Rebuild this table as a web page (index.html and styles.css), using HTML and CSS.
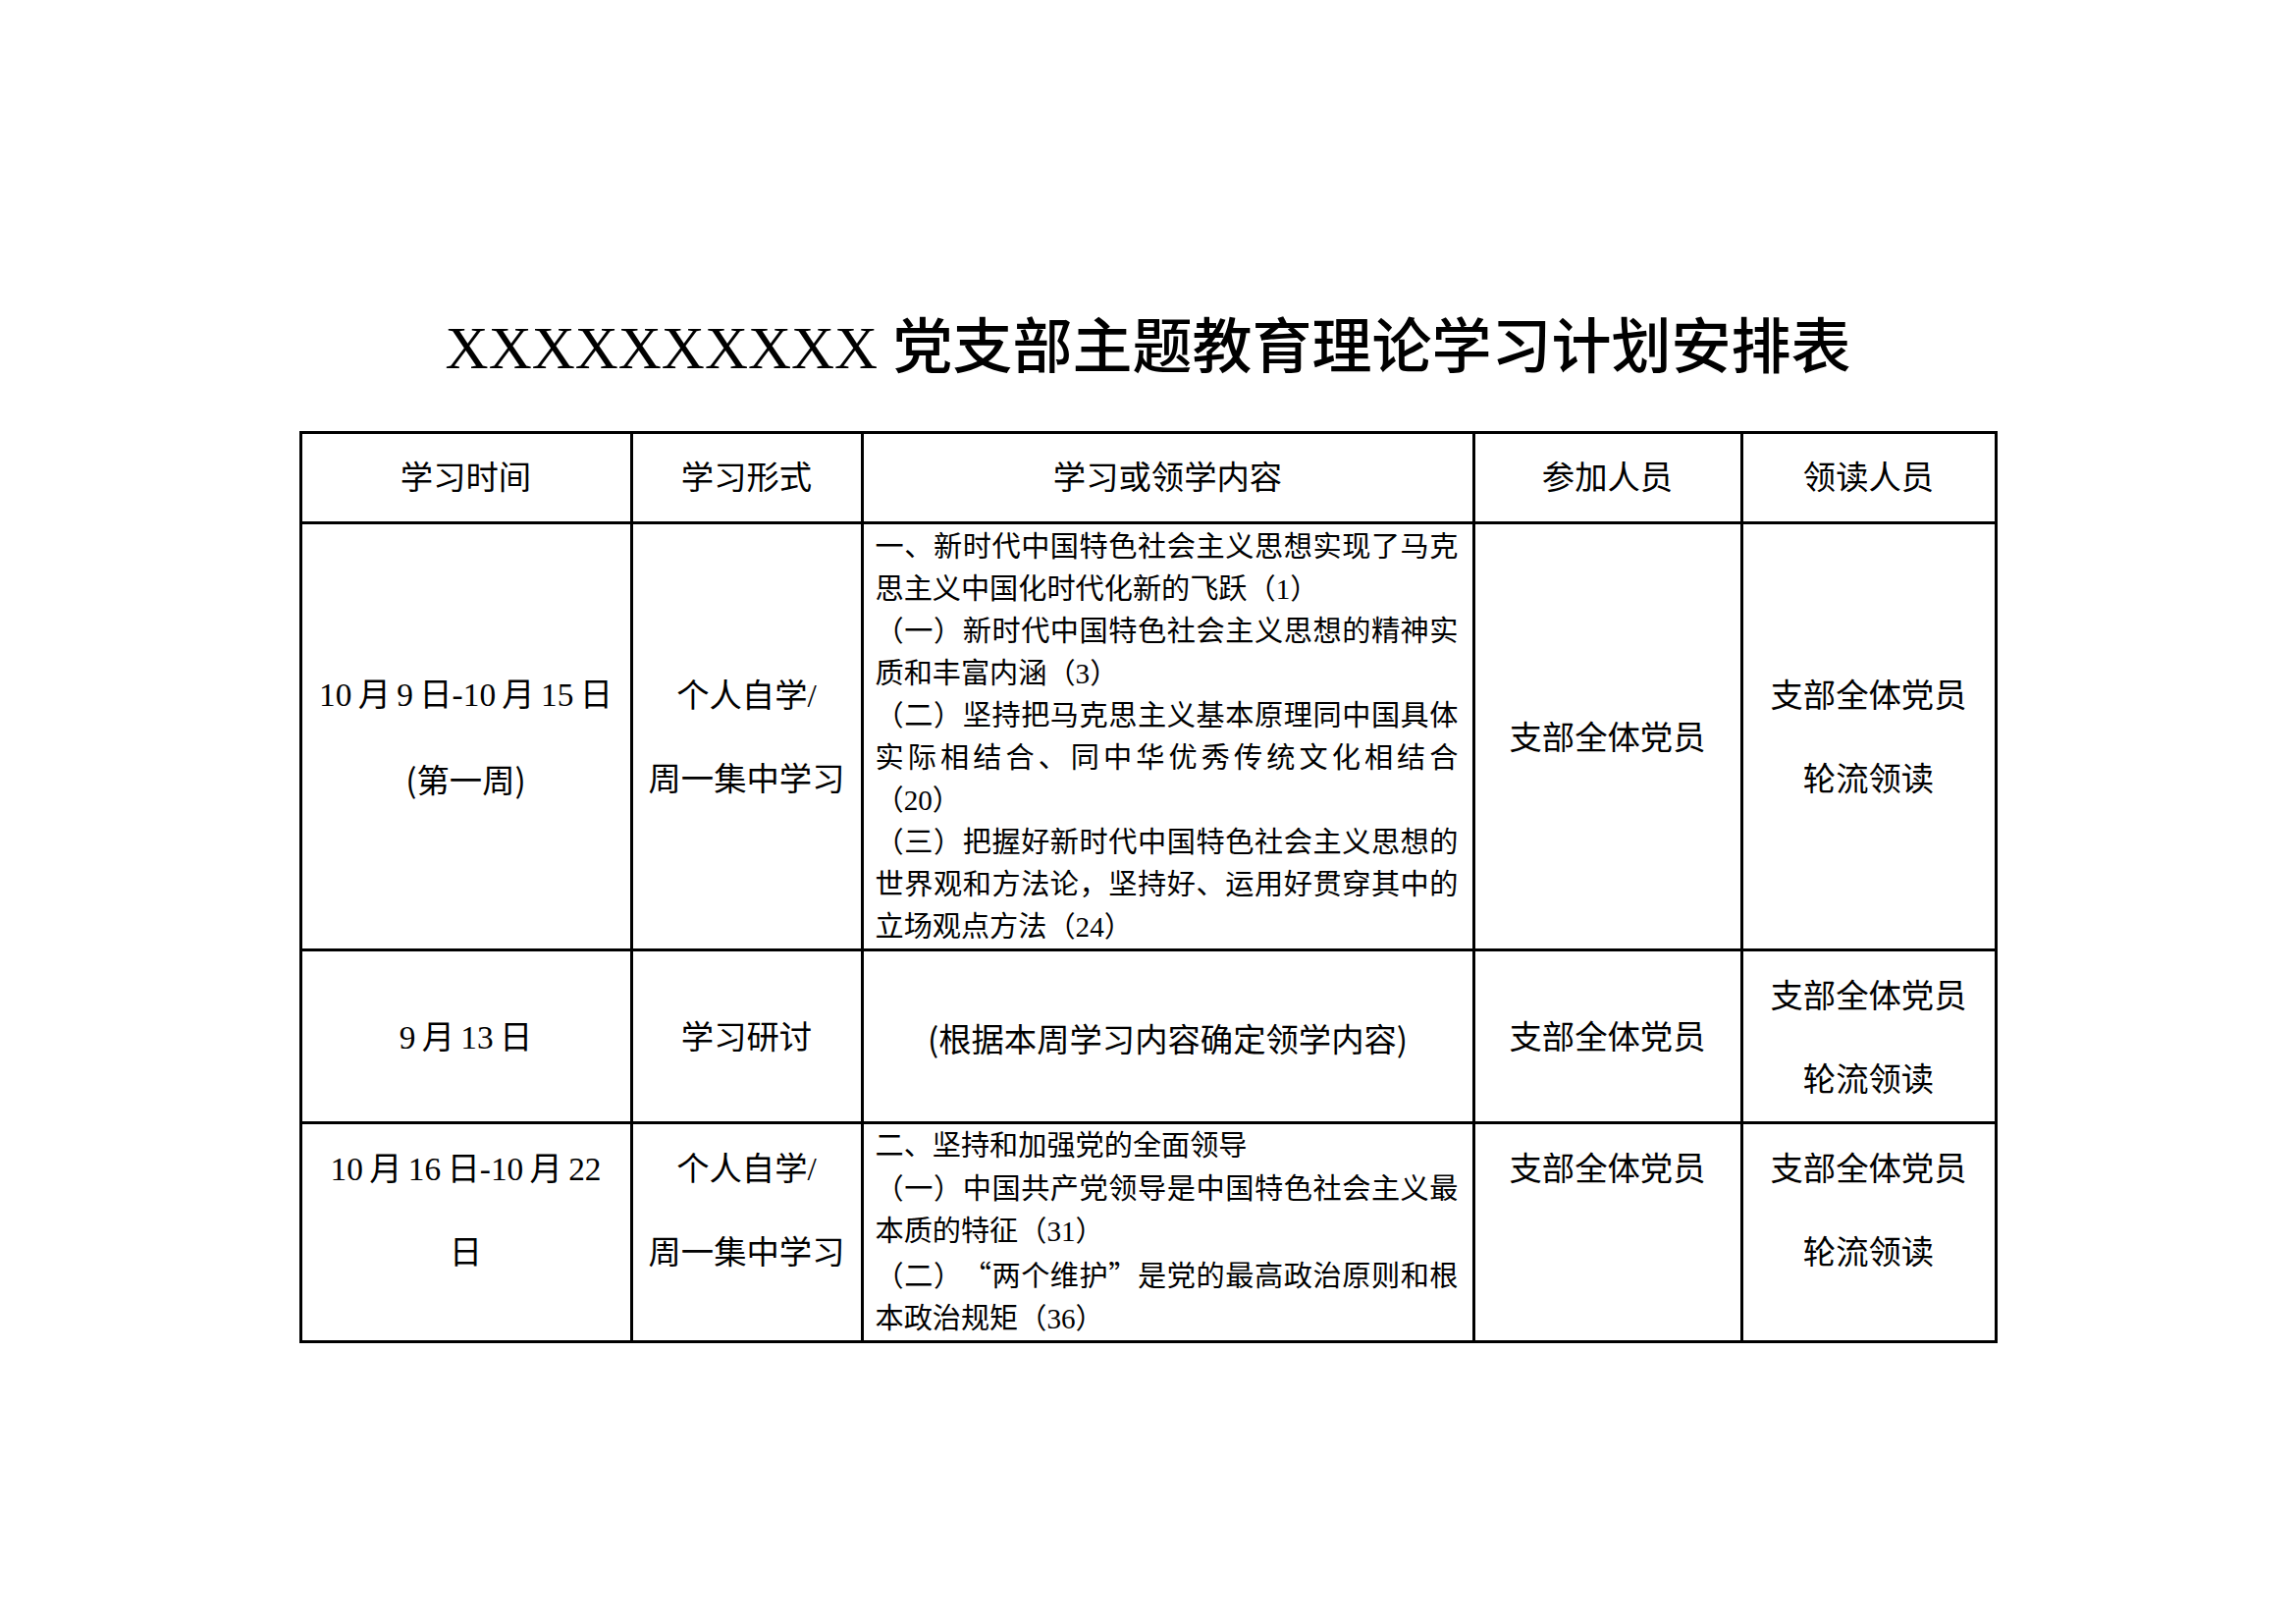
FILE: index.html
```html
<!DOCTYPE html>
<html lang="zh-CN">
<head>
<meta charset="utf-8">
<title>主题教育理论学习计划安排表</title>
<link rel="stylesheet" href="styles.css">
</head>
<body>
<main class="page">
  <h1 class="title">XXXXXXXXXX 党支部主题教育理论学习计划安排表</h1>
  <table class="plan">
    <colgroup>
      <col class="c-time">
      <col class="c-form">
      <col class="c-content">
      <col class="c-part">
      <col class="c-lead">
    </colgroup>
    <thead>
      <tr class="head">
        <th>学习时间</th>
        <th>学习形式</th>
        <th>学习或领学内容</th>
        <th>参加人员</th>
        <th>领读人员</th>
      </tr>
    </thead>
    <tbody>
      <tr class="mid">
        <td class="date">10 月 9 日-10 月 15 日<br><span class="sans">(第一周)</span></td>
        <td>个人自学/<br>周一集中学习</td>
        <td class="content">
          <p>一、新时代中国特色社会主义思想实现了马克思主义中国化时代化新的飞跃（1）</p>
          <p>（一）新时代中国特色社会主义思想的精神实质和丰富内涵（3）</p>
          <p>（二）坚持把马克思主义基本原理同中国具体实际相结合、同中华优秀传统文化相结合（20）</p>
          <p>（三）把握好新时代中国特色社会主义思想的世界观和方法论，坚持好、运用好贯穿其中的立场观点方法（24）</p>
        </td>
        <td>支部全体党员</td>
        <td>支部全体党员<br>轮流领读</td>
      </tr>
      <tr class="mid">
        <td class="date">9 月 13 日</td>
        <td>学习研讨</td>
        <td class="sans">(根据本周学习内容确定领学内容)</td>
        <td>支部全体党员</td>
        <td>支部全体党员<br>轮流领读</td>
      </tr>
      <tr class="top">
        <td class="date">10 月 16 日-10 月 22 日</td>
        <td>个人自学/<br>周一集中学习</td>
        <td class="content">
          <p>二、坚持和加强党的全面领导</p>
          <p>（一）中国共产党领导是中国特色社会主义最本质的特征（31）</p>
          <p>（二）<span class="q-open">“</span>两个维护<span class="q-close">”</span>是党的最高政治原则和根本政治规矩（36）</p>
        </td>
        <td>支部全体党员</td>
        <td>支部全体党员<br>轮流领读</td>
      </tr>
    </tbody>
  </table>
</main>
</body>
</html>
```

FILE: styles.css
```css
html,
body {
  margin: 0;
  background: #ffffff;
  color: #000000;
}

body {
  font-family: "Liberation Serif", "Noto Sans CJK SC", serif;
}

.page {
  padding-top: 315px;
  padding-bottom: 120px;
}

.title {
  margin: 0;
  font-size: 61px;
  line-height: 80px;
  font-weight: 500;
  text-align: center;
}

.plan {
  width: 1730px;
  margin: 44px auto 0;
  table-layout: fixed;
  border-collapse: separate;
  border-spacing: 0;
  border-top: 3px solid #000;
  border-left: 3px solid #000;
  font-size: 33.33px;
  line-height: 85px;
}

.c-time { width: 337px; }
.c-form { width: 235px; }
.c-content { width: 623px; }
.c-part { width: 273px; }
.c-lead { width: 259px; }

.plan th,
.plan td {
  border-right: 3px solid #000;
  border-bottom: 3px solid #000;
  padding: 3px 15px 0;
  text-align: center;
  font-weight: 400;
}

.head th {
  line-height: 86.4px;
  padding-top: 2.3px;
  padding-bottom: 0.3px;
  vertical-align: middle;
}

.mid td {
  vertical-align: middle;
}

.top td {
  vertical-align: top;
}

.plan td.date {
  word-spacing: -2px;
}

.plan td.content {
  text-align: justify;
  font-size: 29.17px;
  line-height: 43.05px;
  padding: 1.5px 14px 0 12px;
}

.content p {
  margin: 0;
}

.sans {
  font-family: "Noto Sans CJK SC", sans-serif;
}

.q-open,
.q-close {
  display: inline-block;
  width: 1em;
  font-family: "Noto Sans CJK SC", sans-serif;
}

.q-open {
  text-align: right;
}

.q-close {
  text-align: left;
}
```
